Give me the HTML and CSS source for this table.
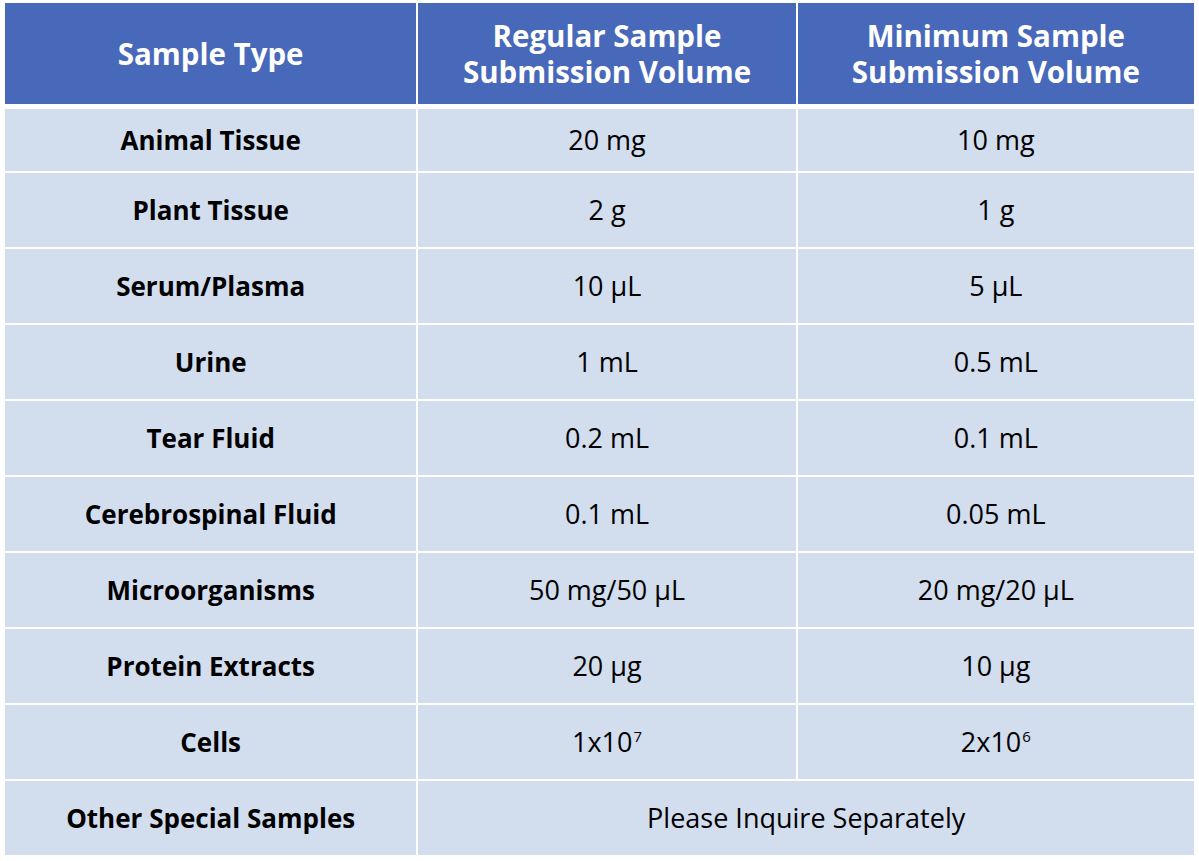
FILE: index.html
```html
<!DOCTYPE html>
<html>
<head>
<meta charset="utf-8">
<link rel="stylesheet" href="styles.css">
</head>
<body>
<table class="grid">
  <colgroup>
    <col class="c1"><col class="c2"><col class="c3">
  </colgroup>
  <thead>
    <tr class="head">
      <th>Sample Type</th>
      <th>Regular Sample<br>Submission Volume</th>
      <th>Minimum Sample<br>Submission Volume</th>
    </tr>
  </thead>
  <tbody>
    <tr class="first"><td class="name">Animal Tissue</td><td>20 mg</td><td>10 mg</td></tr>
    <tr><td class="name">Plant Tissue</td><td>2 g</td><td>1 g</td></tr>
    <tr><td class="name">Serum/Plasma</td><td>10 μL</td><td>5 μL</td></tr>
    <tr><td class="name">Urine</td><td>1 mL</td><td>0.5 mL</td></tr>
    <tr><td class="name">Tear Fluid</td><td>0.2 mL</td><td>0.1 mL</td></tr>
    <tr><td class="name">Cerebrospinal Fluid</td><td>0.1 mL</td><td>0.05 mL</td></tr>
    <tr><td class="name">Microorganisms</td><td>50 mg/50 μL</td><td>20 mg/20 μL</td></tr>
    <tr><td class="name">Protein Extracts</td><td>20 μg</td><td>10 μg</td></tr>
    <tr><td class="name">Cells</td><td>1x10<sup>7</sup></td><td>2x10<sup>6</sup></td></tr>
    <tr class="last"><td class="name">Other Special Samples</td><td colspan="2">Please Inquire Separately</td></tr>
  </tbody>
</table>
</body>
</html>
```

FILE: styles.css
```css
html, body {
  margin: 0;
  padding: 0;
  background: #ffffff;
}
body {
  font-family: "Open Sans", "Noto Sans", sans-serif;
  color: #000;
}
.grid {
  border-collapse: separate;
  border-spacing: 2px;
  margin: 1px 0 0 3px;
  table-layout: fixed;
  width: 1193px;
}
.c1 { width: 411px; }
.c2 { width: 377px; }
.c3 { width: 396px; }
.grid th, .grid td {
  padding: 0;
  text-align: center;
  vertical-align: middle;
}
.head th {
  background: #4868b9;
  color: #ffffff;
  font-weight: 700;
  font-size: 29.5px;
  line-height: 36px;
  height: 104px;
  border-bottom: 3px solid #ffffff;
  box-sizing: border-box;
}
.grid td {
  background: #d2ddee;
  font-size: 27px;
  height: 74px;
  line-height: 30px;
}
.grid tr.first td { height: 62px; }
.grid td.name {
  font-weight: 700;
  font-size: 26px;
}
.grid sup {
  font-size: 15px;
  vertical-align: 10px;
  line-height: 0;
  margin-left: 1px;
}
```
